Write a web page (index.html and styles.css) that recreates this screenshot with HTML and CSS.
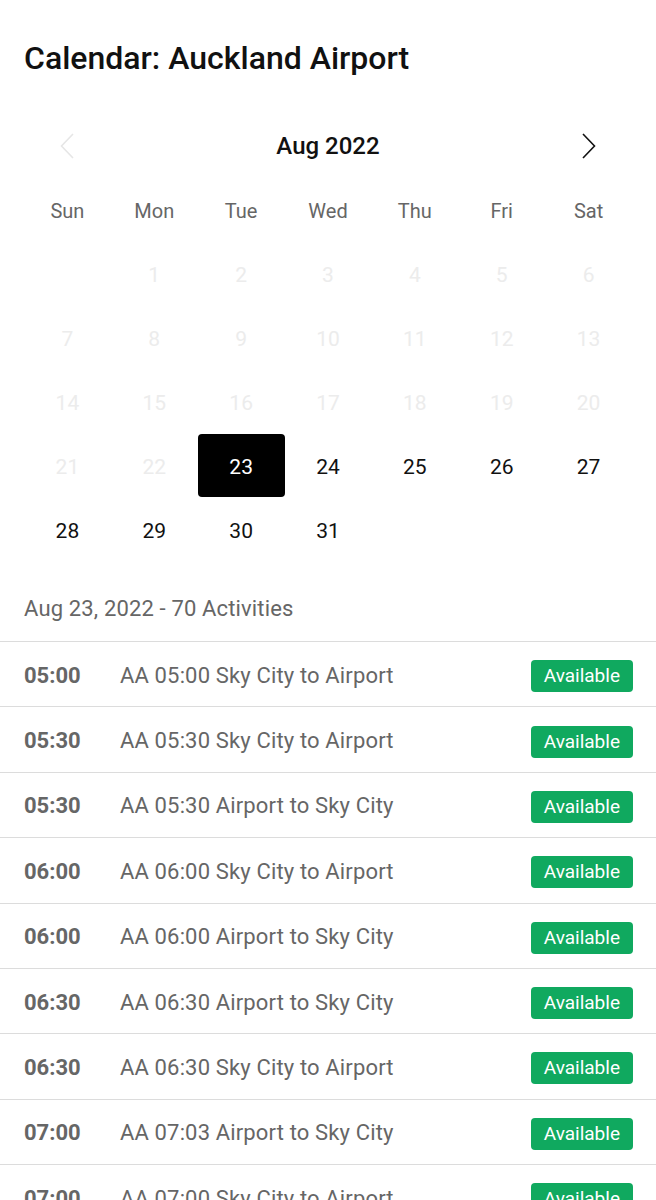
FILE: index.html
```html
<!DOCTYPE html>
<html lang="en">
<head>
<meta charset="utf-8">
<title>Calendar: Auckland Airport</title>
<link rel="stylesheet" href="styles.css">
</head>
<body>
<main class="page">
  <h1 class="title">Calendar: Auckland Airport</h1>

  <section class="calendar">
    <div class="cal-head">
      <button class="nav nav-prev" aria-label="Previous month">
        <svg width="14" height="26" viewBox="0 0 14 26"><path d="M13 1 L1.5 13 L13 25" fill="none" stroke="currentColor" stroke-width="1.6"/></svg>
      </button>
      <div class="month">Aug 2022</div>
      <button class="nav nav-next" aria-label="Next month">
        <svg width="14" height="26" viewBox="0 0 14 26"><path d="M1 1 L12.5 13 L1 25" fill="none" stroke="currentColor" stroke-width="1.6"/></svg>
      </button>
    </div>
    <div class="grid">
      <div class="wd">Sun</div><div class="wd">Mon</div><div class="wd">Tue</div><div class="wd">Wed</div><div class="wd">Thu</div><div class="wd">Fri</div><div class="wd">Sat</div>

      <div class="day"></div><div class="day off">1</div><div class="day off">2</div><div class="day off">3</div><div class="day off">4</div><div class="day off">5</div><div class="day off">6</div>
      <div class="day off">7</div><div class="day off">8</div><div class="day off">9</div><div class="day off">10</div><div class="day off">11</div><div class="day off">12</div><div class="day off">13</div>
      <div class="day off">14</div><div class="day off">15</div><div class="day off">16</div><div class="day off">17</div><div class="day off">18</div><div class="day off">19</div><div class="day off">20</div>
      <div class="day off">21</div><div class="day off">22</div><div class="day selected">23</div><div class="day">24</div><div class="day">25</div><div class="day">26</div><div class="day">27</div>
      <div class="day">28</div><div class="day">29</div><div class="day">30</div><div class="day">31</div><div class="day"></div><div class="day"></div><div class="day"></div>
    </div>
  </section>

  <section class="activities">
    <div class="act-head">Aug 23, 2022 - 70 Activities</div>
    <ul class="list">
      <li class="row"><span class="time">05:00</span><span class="name">AA 05:00 Sky City to Airport</span><span class="badge">Available</span></li>
      <li class="row"><span class="time">05:30</span><span class="name">AA 05:30 Sky City to Airport</span><span class="badge">Available</span></li>
      <li class="row"><span class="time">05:30</span><span class="name">AA 05:30 Airport to Sky City</span><span class="badge">Available</span></li>
      <li class="row"><span class="time">06:00</span><span class="name">AA 06:00 Sky City to Airport</span><span class="badge">Available</span></li>
      <li class="row"><span class="time">06:00</span><span class="name">AA 06:00 Airport to Sky City</span><span class="badge">Available</span></li>
      <li class="row"><span class="time">06:30</span><span class="name">AA 06:30 Airport to Sky City</span><span class="badge">Available</span></li>
      <li class="row"><span class="time">06:30</span><span class="name">AA 06:30 Sky City to Airport</span><span class="badge">Available</span></li>
      <li class="row"><span class="time">07:00</span><span class="name">AA 07:03 Airport to Sky City</span><span class="badge">Available</span></li>
      <li class="row"><span class="time">07:00</span><span class="name">AA 07:00 Sky City to Airport</span><span class="badge">Available</span></li>
      <li class="row"><span class="time">07:30</span><span class="name">AA 07:30 Airport to Sky City</span><span class="badge">Available</span></li>
    </ul>
  </section>
</main>
</body>
</html>
```

FILE: styles.css
```css
* { box-sizing: border-box; }

html, body {
  margin: 0;
  padding: 0;
  background: #fff;
}

body {
  font-family: Roboto, "Liberation Sans", Arial, sans-serif;
  color: #111;
}

.title {
  margin: 0;
  padding: 40px 24px 0;
  font-size: 32px;
  line-height: 36px;
  font-weight: 500;
  color: #111;
}

.calendar {
  margin-top: 38px;
  padding: 0 24px;
}

.cal-head {
  display: grid;
  grid-template-columns: repeat(7, 1fr);
  height: 64px;
  align-items: center;
}

.nav {
  border: 0;
  background: none;
  padding: 0;
  display: flex;
  justify-content: center;
  align-items: center;
  cursor: pointer;
}

.nav-prev { grid-column: 1; color: #e6e6e6; }
.nav-next { grid-column: 7; color: #111; }

.month {
  grid-column: 2 / 7;
  text-align: center;
  font-size: 24px;
  font-weight: 500;
  color: #111;
}

.grid {
  display: grid;
  grid-template-columns: repeat(7, 1fr);
  grid-auto-rows: 64px;
}

.wd {
  display: flex;
  align-items: center;
  justify-content: center;
  font-size: 20px;
  color: #666;
  padding-top: 2px;
}

.day {
  display: flex;
  align-items: center;
  justify-content: center;
  font-size: 21px;
  color: #111;
  padding-top: 2px;
}

.day.off { color: #ececec; }

.day.selected {
  background: #000;
  color: #fff;
  border-radius: 4px;
  margin-bottom: 1px;
}

.act-head {
  padding: 34px 24px 19px;
  font-size: 22px;
  line-height: 26px;
  letter-spacing: 0.15px;
  color: #666;
  border-bottom: 1px solid #dcdcdc;
}

.list {
  list-style: none;
  margin: 0;
  padding: 0;
}

.row {
  display: flex;
  align-items: center;
  min-height: 65.375px;
  padding: 2px 23px 0 24px;
  border-bottom: 1px solid #dcdcdc;
  font-size: 22px;
  color: #666;
}

.time {
  width: 96px;
  flex: none;
  font-weight: 700;
}

.name {
  flex: 1;
  letter-spacing: 0.15px;
}

.badge {
  flex: none;
  background: #10a95f;
  color: #fff;
  font-size: 19px;
  line-height: 32px;
  height: 32px;
  padding: 0 13px;
  border-radius: 4px;
  margin-top: 2px;
}
```
